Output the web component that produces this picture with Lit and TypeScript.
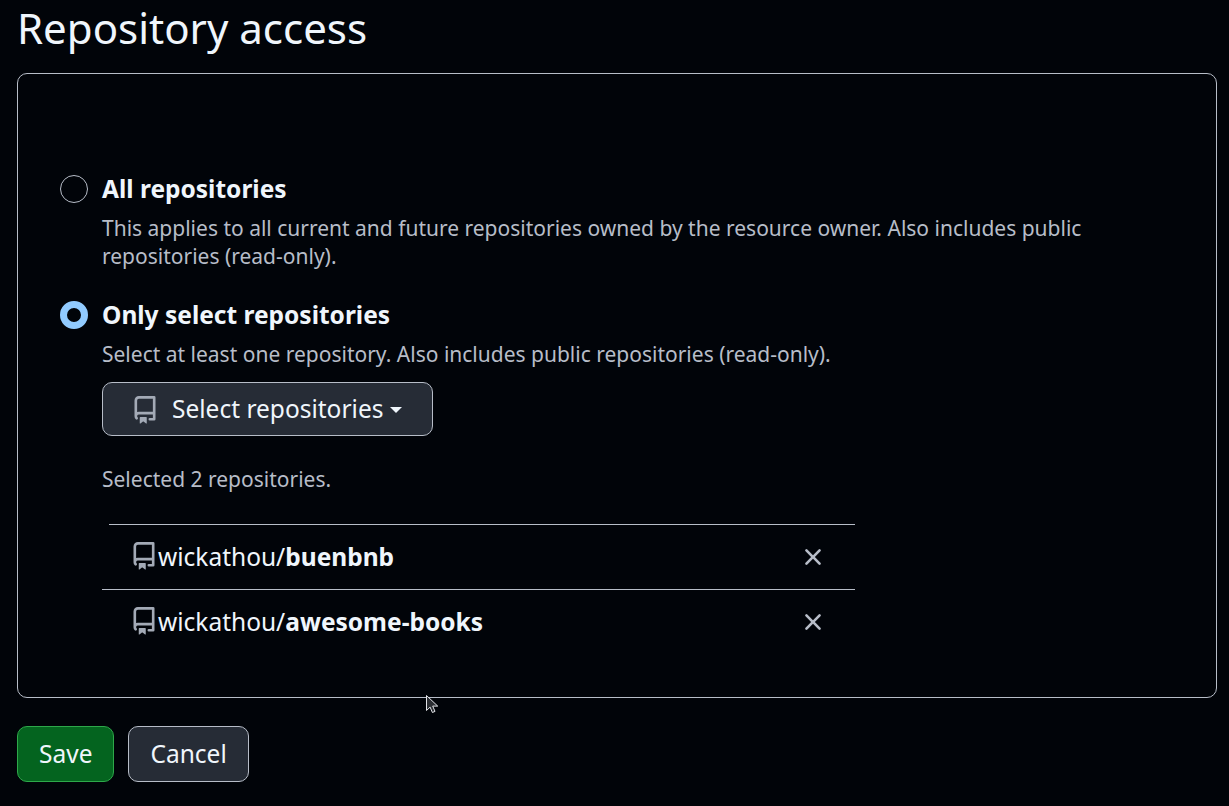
import { LitElement, html, css, svg } from "lit";
import { customElement } from "lit/decorators.js";

const repoIcon = (size: number, cls: string) => html`<svg class=${cls} width=${size} height=${size} viewBox="0 0 16 16" fill="currentColor"><path d="M2 2.5A2.5 2.5 0 0 1 4.5 0h8.75a.75.75 0 0 1 .75.75v12.5a.75.75 0 0 1-.75.75h-2.5a.75.75 0 0 1 0-1.5h1.75v-2h-8a1 1 0 0 0-.714 1.7.75.75 0 1 1-1.072 1.05A2.495 2.495 0 0 1 2 11.5Zm10.5-1h-8a1 1 0 0 0-1 1v6.708A2.486 2.486 0 0 1 4.5 9h8ZM5 12.25a.25.25 0 0 1 .25-.25h3.5a.25.25 0 0 1 .25.25v3.25a.25.25 0 0 1-.4.2l-1.45-1.087a.249.249 0 0 0-.3 0L5.4 15.7a.25.25 0 0 1-.4-.2Z"/></svg>`;

const xIcon = html`<svg width="28" height="28" viewBox="0 0 16 16" fill="currentColor"><path d="M3.72 3.72a.75.75 0 0 1 1.06 0L8 6.94l3.22-3.22a.749.749 0 0 1 1.06 1.06L9.06 8l3.22 3.22a.749.749 0 1 1-1.06 1.06L8 9.06l-3.22 3.22a.749.749 0 1 1-1.06-1.06L6.94 8 3.72 4.78a.75.75 0 0 1 0-1.06Z"/></svg>`;

@customElement("app-root")
export class AppRoot extends LitElement {
  static styles = css`
    :host { display: block; height: 806px; overflow: hidden; position: relative; background: #010409; color: #f0f6fc; font-family: "Noto Sans", sans-serif; font-size: 24.5px; line-height: 1.5; }
    * { box-sizing: border-box; }
    .page { padding: 0 12px 0 17px; }
    h1 { margin: 0; font-size: 42px; font-weight: 400; line-height: 56px; height: 73px; }
    .card { height: 625px; border: 1px solid #b7bdc8; border-radius: 10px; padding: 101px 42px 0; }
    .opt { display: grid; grid-template-columns: 28px 1fr; column-gap: 14px; }
    .radio { width: 28px; height: 28px; border-radius: 50%; border: 1px solid #b7bdc8; }
    .radio.on { border: 7px solid #91cbff; background: #010409; }
    .label { font-weight: 700; font-size: 24.5px; line-height: 28px; }
    .desc { font-size: 21px; line-height: 28px; color: #b7bdc8; margin-top: 11px; grid-column: 2; }
    .opt + .opt { margin-top: 31px; }
    .sel { grid-column: 2; margin-top: 14px; width: 331px; height: 54px; display: flex; align-items: center; background: #262c36; border: 1px solid #b7bdc8; border-radius: 10px; padding: 0 0 0 28px; font-size: 24.5px; color: #f0f6fc; }
    .sel .ic { color: #a3aab6; margin-right: 13px; margin-top: 2px; }
    .caret { width: 0; height: 0; border: 6.5px solid transparent; border-top-color: #f0f6fc; border-bottom-width: 0; margin-left: 6.5px; margin-top: 2px; }
    .count { grid-column: 2; font-size: 21px; line-height: 28px; color: #b7bdc8; margin-top: 29px; }
    .list { grid-column: 2; width: 753px; margin-top: 31px; }
    .row { height: 65px; display: flex; align-items: center; padding-left: 28px; padding-right: 28px; border-top: 1px solid #b7bdc8; font-size: 24.5px; }
    .row:first-child { margin-left: 7px; padding-left: 21px; }
    .row .ic { color: #a3aab6; flex: none; margin-top: -2px; }
    .row b { font-weight: 700; }
    .name { flex: 1; }
    .x { color: #b7bdc8; display: flex; }
    .actions { display: flex; gap: 14px; margin-top: 28px; }
    .btn { height: 56px; display: flex; align-items: center; border-radius: 10px; font-size: 24.5px; border: 1px solid #b7bdc8; background: #262c36; padding: 0 21px; color: #f0f6fc; }
    .btn.save { background: #04641f; border-color: #2ea84a; }
    .cursor { position: absolute; left: 425px; top: 694px; }
  `;
  render() {
    return html`<div class="page">
      <h1>Repository access</h1>
      <div class="card">
        <div class="opt">
          <div class="radio"></div>
          <div class="label">All repositories</div>
          <div class="desc">This applies to all current and future repositories owned by the resource owner. Also includes public repositories (read-only).</div>
        </div>
        <div class="opt">
          <div class="radio on"></div>
          <div class="label">Only select repositories</div>
          <div class="desc">Select at least one repository. Also includes public repositories (read-only).</div>
          <div class="sel">${repoIcon(28, "ic")}<span>Select repositories</span><span class="caret"></span></div>
          <div class="count">Selected 2 repositories.</div>
          <div class="list">
            <div class="row">${repoIcon(28, "ic")}<span class="name">wickathou/<b>buenbnb</b></span><span class="x">${xIcon}</span></div>
            <div class="row">${repoIcon(28, "ic")}<span class="name">wickathou/<b>awesome-books</b></span><span class="x">${xIcon}</span></div>
          </div>
        </div>
      </div>
      <div class="actions"><div class="btn save">Save</div><div class="btn">Cancel</div></div>
    </div>
    <svg class="cursor" width="16" height="22" viewBox="0 0 16 22">${svg`<path d="M1.5 1.5v15l3.6-3.4 2.3 5.4 2.6-1.1-2.3-5.3h5z" fill="#2b2e33" stroke="#e2e4e8" stroke-width="1"/>`}</svg>`;
  }
}
